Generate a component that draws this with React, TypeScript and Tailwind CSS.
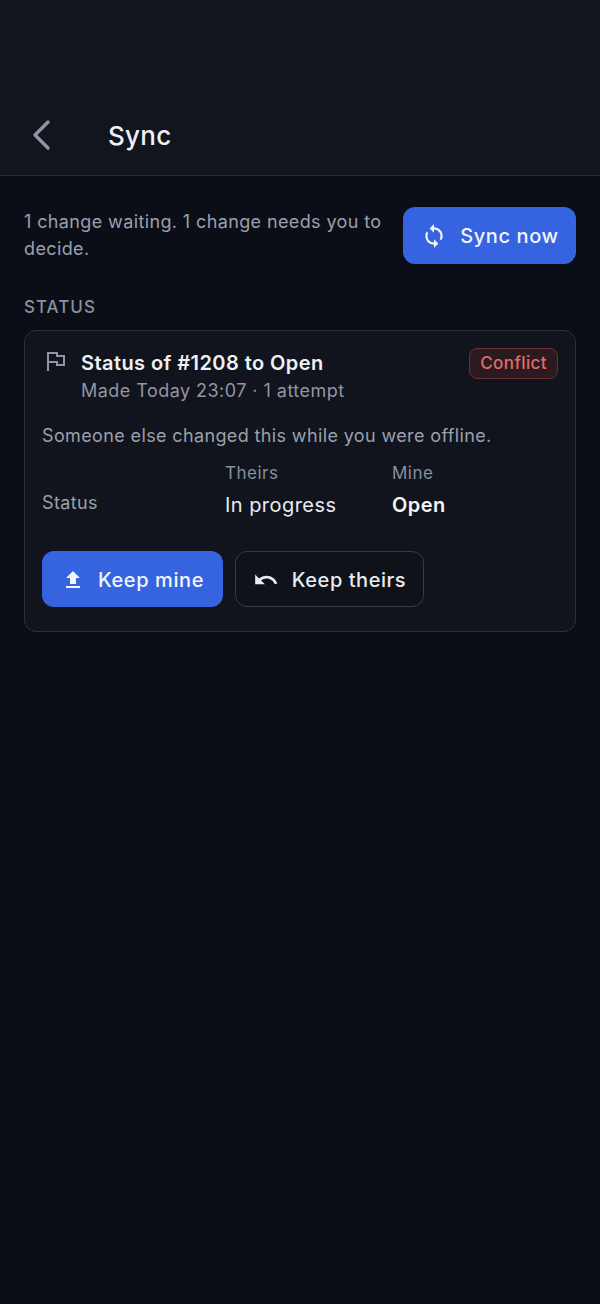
import { MdFileUpload, MdSync, MdUndo } from "react-icons/md";

export default function App() {
  return (
    <div className="flex min-h-[1304px] w-[600px] flex-col bg-[#0b0e17] font-['Inter',sans-serif] text-[#e8ebf2]">
      <header className="flex h-[176px] items-end border-b border-[#262b36] bg-[#11151e] pb-[20px]">
        <div className="flex h-[40px] items-center">
          <svg
            viewBox="0 0 24 36"
            className="ml-[29px] h-[36px] w-[24px] text-[#8e94a1]"
            fill="none"
            stroke="currentColor"
            strokeWidth="3.4"
            strokeLinecap="round"
            strokeLinejoin="round"
          >
            <path d="M19 5 L6 18 L19 31" />
          </svg>
          <h1 className="ml-[55px] text-[26px] font-medium tracking-[0.25px] text-[#eef0f5]">Sync</h1>
        </div>
      </header>

      <main className="flex flex-col px-[24px] pt-[31px]">
        <div className="flex items-start justify-between">
          <p className="mt-[1px] w-[370px] text-[18px] leading-[27px] tracking-[0.38px] text-[#9aa0ad]">
            1 change waiting. 1 change needs you to decide.
          </p>
          <button className="flex h-[57px] w-[173px] items-center justify-center gap-[13px] rounded-[12px] bg-[#3663e0] pl-[1px] text-[20px] font-medium tracking-[0.6px] text-[#f3f5fb]">
            <MdSync className="size-[26px]" />
            Sync now
          </button>
        </div>

        <h2 className="mt-[31px] text-[17px] font-medium leading-[24px] tracking-[1px] text-[#8a909d]">STATUS</h2>

        <section className="mt-[11px] h-[302px] rounded-[12px] border border-[#2a2f39] bg-[#11141c] px-[17px] pt-[18px]">
          <div className="flex items-start">
            <svg
              viewBox="0 0 20 20"
              className="ml-[4px] mt-[2px] size-[20px] text-[#8e94a1]"
              fill="none"
              stroke="currentColor"
              strokeWidth="2"
            >
              <path d="M2 20 V2 H11 V5 H18 V14 H11 V11 H2" />
            </svg>
            <div className="ml-[15px] flex-1">
              <h3 className="text-[20px] font-semibold leading-[29px] tracking-[0.43px] text-[#eef0f5]">
                Status of #1208 to Open
              </h3>
              <p className="text-[18px] leading-[26px] tracking-[0.46px] text-[#9096a3]">Made Today 23:07 · 1 attempt</p>
            </div>
            <span className="-mt-[1px] flex h-[31px] items-center rounded-[8px] border border-[#6b3234] bg-[#2b1a1f] px-[10px] pt-[1px] text-[17px] font-medium tracking-[0.4px] text-[#e06c6c]">
              Conflict
            </span>
          </div>

          <p className="mt-[18px] text-[18px] leading-[27px] tracking-[0.37px] text-[#9aa0ad]">
            Someone else changed this while you were offline.
          </p>

          <div className="mt-[12px] grid grid-cols-[183px_167px_1fr] items-center">
            <span />
            <span className="text-[17px] leading-[24px] tracking-[0.5px] text-[#8a909d]">Theirs</span>
            <span className="text-[17px] leading-[24px] tracking-[0.5px] text-[#8a909d]">Mine</span>
            <span className="text-[18px] leading-[27px] tracking-[0.35px] text-[#9aa0ad]">Status</span>
            <span className="mt-[6px] text-[20px] leading-[28px] tracking-[0.45px] text-[#e8ebf2]">In progress</span>
            <span className="mt-[6px] text-[20px] font-semibold leading-[28px] tracking-[0.4px] text-[#f3f5fb]">Open</span>
          </div>

          <div className="mt-[32px] flex gap-[12px]">
            <button className="flex h-[56px] w-[181px] items-center justify-center gap-[13px] rounded-[12px] bg-[#3663e0] pt-[1px] text-[20px] font-medium tracking-[0.6px] text-[#f3f5fb]">
              <MdFileUpload className="size-[24px]" />
              Keep mine
            </button>
            <button className="flex h-[56px] w-[189px] items-center justify-center gap-[13px] rounded-[12px] border border-[#343a46] bg-[#0f1219] pt-[1px] text-[20px] font-medium tracking-[0.55px] text-[#e8ebf2]">
              <MdUndo className="size-[26px]" />
              Keep theirs
            </button>
          </div>
        </section>
      </main>
    </div>
  );
}
